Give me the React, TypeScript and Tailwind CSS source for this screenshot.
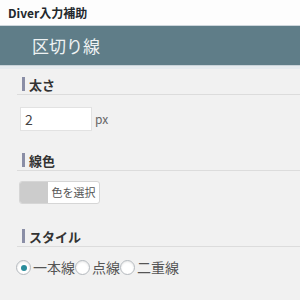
const FONT = "font-['Noto_Sans_CJK_JP','Noto_Sans',sans-serif]";

function Heading({ label }: { label: string }) {
    return (
        <div className="ml-[17px] flex h-[21px] items-center border-b border-[#dcdcdc] pl-[5px]">
            <span className="mr-[4px] h-[14px] w-[3px] bg-[#8a8ea6]" />
            <span className="text-[13px] leading-none font-bold text-[#333]">{label}</span>
        </div>
    );
}

function Radio({ label, checked }: { label: string; checked?: boolean }) {
    return (
        <label className="flex items-center">
            <span className="flex h-[15px] w-[15px] items-center justify-center rounded-full border border-[#b4b9be] bg-white shadow-[inset_0_1px_2px_rgba(0,0,0,0.1)]">
                {checked ? <span className="h-[6px] w-[6px] rounded-full bg-[#2a8d9c]" /> : null}
            </span>
            <span className="ml-[2px] text-[14px] text-[#555]">{label}</span>
        </label>
    );
}

export default function App() {
    return (
        <div className={`h-[300px] w-[300px] overflow-hidden bg-[#f1f1f1] ${FONT}`}>
            <div className="flex h-[26px] items-center border-b border-[#cdd6dc] bg-[#fdfdfd] pl-[8px] text-[12px] font-semibold text-[#23282d]">
                Diver入力補助
            </div>
            <div className="flex h-[39px] items-center bg-[#5f7d88] pl-[32px] text-[17px] text-[#eef2f3]">
                区切り線
            </div>
            <div className="h-[4px] border-t border-[#c9d3d9] bg-[#e6ebef]" />

            <div className="pt-[5px]">
                <Heading label="太さ" />
                <div className="mt-[12px] ml-[20px] flex items-center">
                    <input
                        readOnly
                        value="2"
                        className="h-[24px] w-[72px] border border-[#e2e2e2] bg-white px-[4px] text-[14px] text-[#444] outline-none"
                    />
                    <span className="ml-[3px] text-[12px] text-[#666]">px</span>
                </div>

                <div className="mt-[19px]">
                    <Heading label="線色" />
                </div>
                <div className="mt-[10px] ml-[19px] flex h-[23px] w-[81px] overflow-hidden rounded-[3px] border border-[#d6d6d6] bg-white">
                    <span className="w-[28px] bg-[#cccccc]" />
                    <span className="flex flex-1 items-center justify-center text-[11px] text-[#555]">色を選択</span>
                </div>

                <div className="mt-[22px]">
                    <Heading label="スタイル" />
                </div>
                <div className="mt-[10px] ml-[16px] flex items-center gap-0">
                    <Radio label="一本線" checked />
                    <Radio label="点線" />
                    <Radio label="二重線" />
                </div>
            </div>
        </div>
    );
}
